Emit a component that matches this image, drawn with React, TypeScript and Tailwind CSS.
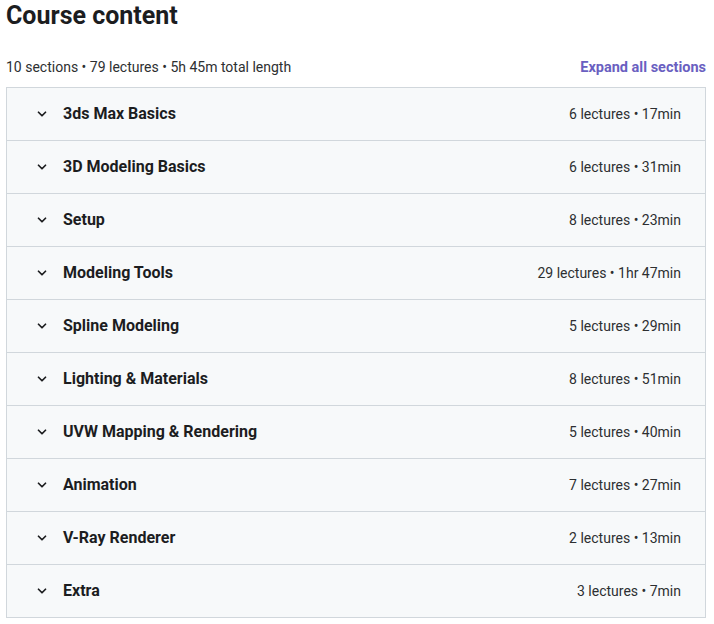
import React from 'react';

// one row per section
interface Section {
  title: string;
  meta: string;
}

const sections: Section[] = [
  { title: '3ds Max Basics', meta: '6 lectures • 17min' },
  { title: '3D Modeling Basics', meta: '6 lectures • 31min' },
  { title: 'Setup', meta: '8 lectures • 23min' },
  { title: 'Modeling Tools', meta: '29 lectures • 1hr 47min' },
  { title: 'Spline Modeling', meta: '5 lectures • 29min' },
  { title: 'Lighting & Materials', meta: '8 lectures • 51min' },
  { title: 'UVW Mapping & Rendering', meta: '5 lectures • 40min' },
  { title: 'Animation', meta: '7 lectures • 27min' },
  { title: 'V-Ray Renderer', meta: '2 lectures • 13min' },
  { title: 'Extra', meta: '3 lectures • 7min' },
];

const App: React.FC = () => {
  return (
    <div className="bg-white text-[#2d2f31] px-[6px] pt-0 w-[714px] h-[624px]" style={{ fontFamily: 'Roboto, "Liberation Sans", sans-serif' }}>
      <div className="w-[700px]">
        {/* heading */}
        <h2 className="text-[25px] font-bold leading-[32px] text-[#1c1d1f]">Course content</h2>

        {/* summary line + expand link */}
        <div className="flex items-end justify-between mt-[25px] mb-[10px]">
          <span className="text-[14px] leading-[20px]">10 sections • 79 lectures • 5h 45m total length</span>
          <button className="text-[14.5px] font-bold leading-[20px] text-[#6a5fc1] translate-y-[1px]">Expand all sections</button>
        </div>

        {/* sections list */}
        <div className="border border-[#d1d7dc]">
          {sections.map((s, i) => (
            <div
              key={i}
              className={`flex items-center justify-between bg-[#f7f9fa] pl-[28px] pr-[24px] ${i > 0 ? 'h-[53px] border-t border-[#d1d7dc]' : 'h-[52px]'}`}
            >
              <div className="flex items-center">
                <svg className="w-[14px] h-[14px] text-[#1c1d1f]" viewBox="0 0 24 24" fill="none" stroke="currentColor">
                  <path strokeLinecap="round" strokeLinejoin="round" strokeWidth={3} d="M6 9l6 6 6-6" />
                </svg>
                <span className="ml-[14px] text-[16px] font-bold text-[#1c1d1f]">{s.title}</span>
              </div>
              <span className="text-[14px]">{s.meta}</span>
            </div>
          ))}
        </div>
      </div>
    </div>
  );
};

export default App;
